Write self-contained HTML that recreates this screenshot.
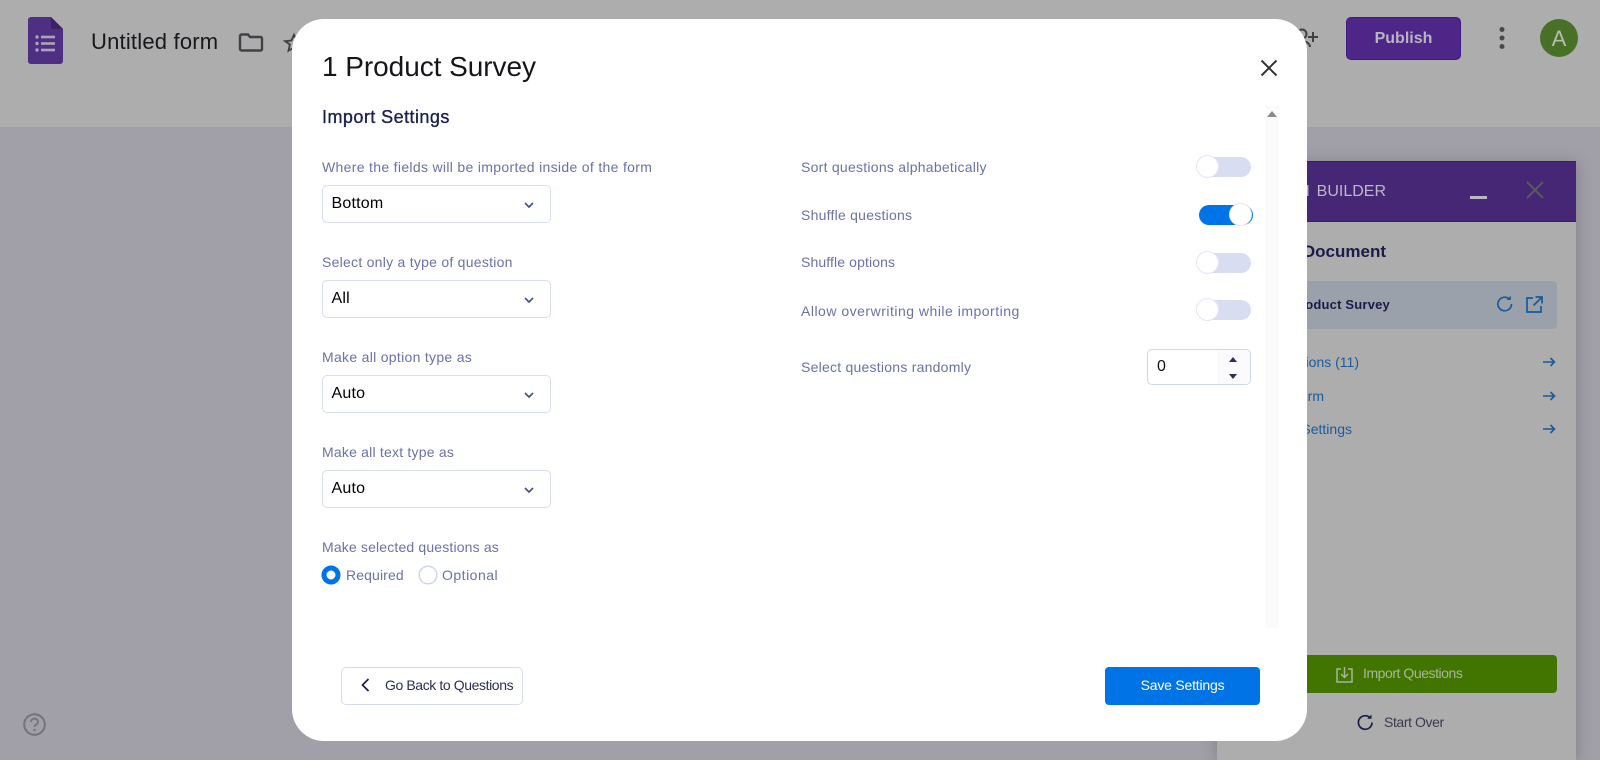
<!DOCTYPE html>
<html><head><meta charset="utf-8"><title>Import Settings</title>
<style>
html,body{margin:0;padding:0}
body{width:1600px;height:760px;overflow:hidden;position:relative;background:#a19fa8;font-family:"Liberation Sans",sans-serif}
.a{position:absolute;white-space:nowrap}
svg{position:absolute;overflow:visible}
.lab{position:absolute;white-space:nowrap;font-size:14px;line-height:18px;color:#6b72a6;letter-spacing:.26px}
.sel{position:absolute;left:322px;width:226.500px;height:35.500px;border:1.500px solid #d9dcf5;border-radius:5px;background:#fff;font-size:16px;line-height:36px;color:#000;text-indent:8.500px;letter-spacing:.2px}
.tr{position:absolute;left:1197px;width:54px;height:20px;border-radius:10px;background:#d9ddf2}
.kn{position:absolute;width:21px;height:21px;border:1.5px solid #e3e5f8;border-radius:50%;background:#fff}
.lnk{position:absolute;right:241px;font-size:14px;line-height:18px;color:#1c5a9e;white-space:nowrap}
</style></head>
<body>
<div class="a" style="left:0;top:0;width:1600px;height:127px;background:#adadad;border-bottom:1px solid #a0a0a2"></div>

<svg style="left:28px;top:17px" width="35" height="47" viewBox="0 0 35 47"><path d="M3 0H23L35 12V44a3 3 0 0 1-3 3H3a3 3 0 0 1-3-3V3a3 3 0 0 1 3-3z" fill="#4e2f84"/><path d="M23 0L35 12H23z" fill="#3b2267"/><g fill="#aaa3b8"><circle cx="9" cy="20" r="1.7"/><circle cx="9" cy="26.500" r="1.700"/><circle cx="9" cy="33" r="1.700"/><rect x="13" y="18.700" width="14" height="2.600"/><rect x="13" y="25.200" width="14" height="2.600"/><rect x="13" y="31.700" width="14" height="2.600"/></g></svg>
<div class="a" style="left:91px;top:28px;font-size:22px;line-height:28px;color:#16181c;letter-spacing:.2px">Untitled form</div>
<svg style="left:239px;top:33px" width="24" height="19" viewBox="0 0 24 19"><path d="M1 3a1.500 1.500 0 0 1 1.500-1.500H9l2 2.500h10.500A1.500 1.500 0 0 1 23 5.500V16a1.500 1.500 0 0 1-1.500 1.500h-19A1.500 1.500 0 0 1 1 16z" fill="none" stroke="#404144" stroke-width="2.400"/></svg>
<svg style="left:283px;top:32px" width="22" height="22" viewBox="0 0 24 24"><path d="M12 3l2.800 6.300 6.900.7-5.200 4.600 1.500 6.800L12 17l-6 3.400 1.500-6.800L2.300 10l6.900-.7z" fill="none" stroke="#404144" stroke-width="2"/></svg>

<svg style="left:1296px;top:28px" width="24" height="22" viewBox="0 0 24 22"><circle cx="6" cy="6" r="4.500" fill="none" stroke="#404144" stroke-width="2"/><path d="M0 19c0-4 3-6 6-6s8 2 8 6" fill="none" stroke="#404144" stroke-width="2"/><path d="M17 4v10M12 9h10" stroke="#404144" stroke-width="2"/></svg>
<div class="a" style="left:1346px;top:17px;width:113px;height:41px;background:#4e2688;border:1px solid #3d1a85;border-radius:5px;text-align:center;font-size:16px;font-weight:bold;line-height:41px;color:#b9b5bf">Publish</div>
<svg style="left:1497px;top:26px" width="10" height="24"><circle cx="5" cy="3.500" r="2.500" fill="#47484b"/><circle cx="5" cy="12" r="2.500" fill="#47484b"/><circle cx="5" cy="20.500" r="2.500" fill="#47484b"/></svg>
<div class="a" style="left:1540px;top:19px;width:38px;height:38px;border-radius:50%;background:#487026;text-align:center;font-size:22px;line-height:39px;color:#b6bdaf">A</div>

<svg style="left:23px;top:713px" width="23" height="23" viewBox="0 0 23 23"><circle cx="11.500" cy="11.500" r="10.300" fill="none" stroke="#747378" stroke-width="2"/><path d="M8 9a3.500 3.500 0 0 1 7 0c0 2.500-3.500 2.700-3.500 5" fill="none" stroke="#747378" stroke-width="1.800"/><circle cx="11.500" cy="17" r="1.200" fill="#747378"/></svg>

<!-- side panel -->
<div class="a" style="left:1217px;top:161px;width:359px;height:599px;background:#adadad;box-shadow:0 2px 14px rgba(60,60,70,.35)"></div>
<div class="a" style="left:1217px;top:161px;width:359px;height:61px;background:#452776;border-top:1px solid #3a1a78;border-bottom:1px solid #3a1a78;box-sizing:border-box"></div>
<div class="a" style="right:214px;top:182px;font-size:16px;line-height:20px;color:#bdb8c8;word-spacing:2.500px">FORM BUILDER</div>
<div class="a" style="left:1470px;top:196px;width:17px;height:3px;background:#bab6c2"></div>
<svg style="left:1526px;top:181px" width="18" height="18"><path d="M1 1L17 17M17 1L1 17" stroke="#5a5a58" stroke-width="2"/></svg>
<div class="a" style="right:214px;top:242px;font-size:17px;font-weight:bold;line-height:20px;color:#1b1c4a">Your Document</div>
<div class="a" style="left:1220px;top:281px;width:337px;height:48px;background:#9ba1aa;border-radius:4px"></div>
<div class="a" style="right:210px;top:296px;font-size:13px;font-weight:bold;line-height:18px;color:#1b1b48;letter-spacing:.2px">1 Product Survey</div>
<svg style="left:1496px;top:295px" width="18" height="18" viewBox="0 0 18 18"><path d="M15.500 9a6.800 6.800 0 1 1-2.200-5" fill="none" stroke="#185a9c" stroke-width="1.700"/><path d="M14.800 0.800v4.200h-4.200z" fill="#185a9c"/></svg>
<svg style="left:1526px;top:296px" width="17" height="17" viewBox="0 0 17 17"><path d="M7 2H1v14h14v-6M9.500 1H16v6.500M16 1L7.500 9.500" fill="none" stroke="#185a9c" stroke-width="1.700"/></svg>
<div class="lnk" style="top:353px">Questions (11)</div>
<div class="lnk" style="top:387px;right:276px">Form</div>
<div class="lnk" style="top:420px;right:248px">Settings</div>
<svg style="left:1543px;top:356px" width="12" height="12"><path d="M0 6H11.500M7.500 2l4 4-4 4" fill="none" stroke="#185a9c" stroke-width="1.600"/></svg>
<svg style="left:1543px;top:390px" width="12" height="12"><path d="M0 6H11.500M7.500 2l4 4-4 4" fill="none" stroke="#185a9c" stroke-width="1.600"/></svg>
<svg style="left:1543px;top:423px" width="12" height="12"><path d="M0 6H11.500M7.500 2l4 4-4 4" fill="none" stroke="#185a9c" stroke-width="1.600"/></svg>
<div class="a" style="left:1220px;top:655px;width:337px;height:38px;background:#417500;border-radius:4px"></div>
<svg style="left:1336px;top:666px" width="17" height="17" viewBox="0 0 17 17"><path d="M5 3H1v13h15V3h-4M8.500 1v10M5 8l3.500 3.500L12 8" fill="none" stroke="#a9b59b" stroke-width="1.500"/></svg>
<div class="a" style="left:1363px;top:664px;font-size:14px;line-height:18px;color:#a9b59b;letter-spacing:-.45px">Import Questions</div>
<svg style="left:1357px;top:714px" width="17" height="17" viewBox="0 0 17 17"><path d="M15 8.500a6.800 6.800 0 1 1-2.200-5" fill="none" stroke="#1b1c4a" stroke-width="1.700"/><path d="M14.500.500v4.200h-4.200z" fill="#1b1c4a"/></svg>
<div class="a" style="left:1384px;top:713px;font-size:14px;line-height:18px;color:#3a3a50;letter-spacing:-.4px">Start Over</div>

<!-- modal -->
<div class="a" style="left:292px;top:19px;width:1015px;height:722px;background:#fff;border-radius:32px"></div>
<div class="a" style="left:322px;top:49px;font-size:28px;line-height:36px;color:#16161a;letter-spacing:-.05px">1 Product Survey</div>
<svg style="left:1261px;top:60px" width="16" height="16"><path d="M.5.500L15.500 15.500M15.500.500L.5 15.500" stroke="#333" stroke-width="2"/></svg>
<div class="a" style="left:322px;top:106px;font-size:18px;line-height:22px;color:#1b2050;-webkit-text-stroke:.35px #1b2050;letter-spacing:.45px">Import Settings</div>
<div class="a" style="left:1265px;top:106px;width:14px;height:522px;background:#fbfbfb"></div>
<svg style="left:1267px;top:111px" width="10" height="6"><path d="M5 0L10 6H0z" fill="#8a8a8a"/></svg>

<div class="lab" style="left:322px;top:158px;letter-spacing:.32px">Where the fields will be imported inside of the form</div>
<div class="sel" style="top:185px">Bottom</div>
<div class="lab" style="left:322px;top:253px">Select only a type of question</div>
<div class="sel" style="top:280px">All</div>
<div class="lab" style="left:322px;top:348px;letter-spacing:.3px">Make all option type as</div>
<div class="sel" style="top:375px">Auto</div>
<div class="lab" style="left:322px;top:443px;letter-spacing:.21px">Make all text type as</div>
<div class="sel" style="top:470px">Auto</div>
<svg style="left:524px;top:202px" width="10" height="7"><path d="M1 1l4 4 4-4" fill="none" stroke="#4b5380" stroke-width="1.700"/></svg>
<svg style="left:524px;top:297px" width="10" height="7"><path d="M1 1l4 4 4-4" fill="none" stroke="#4b5380" stroke-width="1.700"/></svg>
<svg style="left:524px;top:392px" width="10" height="7"><path d="M1 1l4 4 4-4" fill="none" stroke="#4b5380" stroke-width="1.700"/></svg>
<svg style="left:524px;top:487px" width="10" height="7"><path d="M1 1l4 4 4-4" fill="none" stroke="#4b5380" stroke-width="1.700"/></svg>

<div class="lab" style="left:322px;top:538px;letter-spacing:.16px">Make selected questions as</div>
<svg style="left:321px;top:565px" width="20" height="20"><circle cx="10" cy="10" r="7" fill="#fff" stroke="#0074e6" stroke-width="5"/></svg>
<div class="lab" style="left:346px;top:566px;letter-spacing:.12px">Required</div>
<svg style="left:418px;top:565px" width="20" height="20"><circle cx="10" cy="10" r="8.800" fill="#fff" stroke="#d0d5f0" stroke-width="1.500"/></svg>
<div class="lab" style="left:442px;top:566px;letter-spacing:.5px">Optional</div>

<div class="lab" style="left:801px;top:158px">Sort questions alphabetically</div>
<div class="tr" style="top:157px"></div><div class="kn" style="left:1196px;top:155px"></div>
<div class="lab" style="left:801px;top:206px;letter-spacing:.24px">Shuffle questions</div>
<div class="tr" style="top:205px;left:1199px;background:#0074e6"></div><div class="kn" style="left:1229px;top:203px"></div>
<div class="lab" style="left:801px;top:253px;letter-spacing:.12px">Shuffle options</div>
<div class="tr" style="top:253px"></div><div class="kn" style="left:1196px;top:251px"></div>
<div class="lab" style="left:801px;top:302px;letter-spacing:.5px">Allow overwriting while importing</div>
<div class="tr" style="top:300px"></div><div class="kn" style="left:1196px;top:298px"></div>
<div class="lab" style="left:801px;top:358px;letter-spacing:.24px">Select questions randomly</div>

<div class="a" style="left:1147px;top:349px;width:102px;height:34px;border:1.5px solid #d0d5f0;border-radius:5px;background:#fff;overflow:hidden"><div class="a" style="left:69px;top:0;width:33px;height:34px;background:#fafaff"></div><div class="a" style="left:9px;top:0;font-size:16px;line-height:34px;color:#111">0</div></div>
<svg style="left:1229px;top:357px" width="8" height="5"><path d="M4 0L8 5H0z" fill="#2b2f57"/></svg>
<svg style="left:1229px;top:374px" width="8" height="5"><path d="M0 0H8L4 5z" fill="#2b2f57"/></svg>

<div class="a" style="left:341px;top:667px;width:180px;height:36px;border:1.5px solid #d6daf3;border-radius:5px;background:#fff"></div>
<svg style="left:361px;top:678px" width="9" height="14"><path d="M7.500 1L1.500 7l6 6" fill="none" stroke="#1b1c4a" stroke-width="1.700"/></svg>
<div class="a" style="left:385px;top:676px;font-size:14px;line-height:18px;color:#2c2f55;letter-spacing:-.4px">Go Back to Questions</div>
<div class="a" style="left:1105px;top:667px;width:155px;height:38px;background:#0074e6;border-radius:4px;text-align:center;font-size:14px;line-height:37px;color:#fff;letter-spacing:-.2px">Save Settings</div>
</body></html>
